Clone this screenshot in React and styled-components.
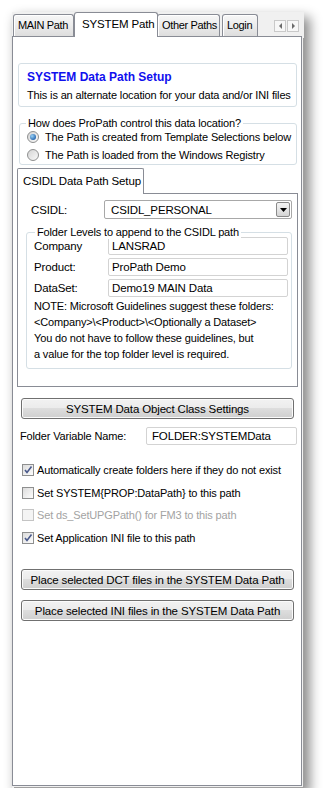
import React from "react";
import styled, { createGlobalStyle } from "styled-components";

const GlobalStyle = createGlobalStyle`
  html, body {
    margin: 0;
    background: #fff;
  }
  body {
    font-family: "Liberation Sans", Arial, sans-serif;
    font-size: 11px;
    letter-spacing: -0.15px;
    color: #000;
  }
`;

const CheckMark = () => (
  <svg width="10" height="10" viewBox="0 0 10 10">
    <path d="M2 5 L4 7.5 L8.5 1.5" fill="none" stroke="#4a5a8c" strokeWidth="1.6" />
  </svg>
);

const Check = ({ checked, disabled, children }) => (
  <CheckRow $disabled={disabled}>
    <CheckBox $disabled={disabled}>{checked && <CheckMark />}</CheckBox>
    {children}
  </CheckRow>
);

const Radio = ({ checked, children }) => (
  <RadioRow>
    <RadioCircle>{checked && <RadioDot />}</RadioCircle>
    {children}
  </RadioRow>
);

const App = () => {
  return (
    <>
      <GlobalStyle />
      <Frame>
        <TabStrip>
          <Tab $w={61}>MAIN Path</Tab>
          <Tab $w={84} $active>SYSTEM Path</Tab>
          <Tab $w={63}>Other Paths</Tab>
          <Tab $w={36} $gap={2}>Login</Tab>
          <Scroller>
            <ScrollBtn>
              <svg width="5" height="6" viewBox="0 0 5 6"><path d="M4 0 L1 3 L4 6 Z" fill="#6b6b6b" /></svg>
            </ScrollBtn>
            <ScrollBtn>
              <svg width="5" height="6" viewBox="0 0 5 6"><path d="M1 0 L4 3 L1 6 Z" fill="#6b6b6b" /></svg>
            </ScrollBtn>
          </Scroller>
        </TabStrip>
        <Panel>
          <HeaderBox>
            <Title>SYSTEM Data Path Setup</Title>
            <Subtitle>This is an alternate location for your data and/or INI files</Subtitle>
          </HeaderBox>

          <Group $top={16} $ml={2} $pt={4} $pb={0}>
            <Legend $left={6}>How does ProPath control this data location?</Legend>
            <Radio checked>The Path is created from Template Selections below</Radio>
            <Radio>The Path is loaded from the Windows Registry</Radio>
          </Group>

          <InnerTabs>
            <InnerTab>CSIDL Data Path Setup</InnerTab>
          </InnerTabs>
          <InnerPanel>
            <ComboRow>
              <ComboLabel>CSIDL:</ComboLabel>
              <Combo>
                <ComboText>CSIDL_PERSONAL</ComboText>
                <ComboBtn>
                  <svg width="7" height="4" viewBox="0 0 7 4"><path d="M0 0 L7 0 L3.5 4 Z" fill="#000" /></svg>
                </ComboBtn>
              </Combo>
            </ComboRow>

            <Group $top={13} $ml={8} $mr={5} $pt={4} $pb={6}>
              <Legend $left={8}>Folder Levels to append to the CSIDL path</Legend>
              <FieldRow>
                <FieldLabel>Company</FieldLabel>
                <Field $w={180} $pl={3}>LANSRAD</Field>
              </FieldRow>
              <FieldRow>
                <FieldLabel>Product:</FieldLabel>
                <Field $w={180} $pl={3}>ProPath Demo</Field>
              </FieldRow>
              <FieldRow>
                <FieldLabel>DataSet:</FieldLabel>
                <Field $w={180} $pl={3}>Demo19 MAIN Data</Field>
              </FieldRow>
              <Note>
                NOTE: Microsoft Guidelines suggest these folders:
                <br />
                &lt;Company&gt;\&lt;Product&gt;\&lt;Optionally a Dataset&gt;
                <br />
                You do not have to follow these guidelines, but
                <br />
                a value for the top folder level is required.
              </Note>
            </Group>
          </InnerPanel>

          <Button $top={11}>SYSTEM Data Object Class Settings</Button>

          <VarRow>
            <VarLabel>Folder Variable Name:</VarLabel>
            <Field $w={151} $pl={5}>FOLDER:SYSTEMData</Field>
          </VarRow>

          <Checks>
            <Check checked>Automatically create folders here if they do not exist</Check>
            <Check>Set SYSTEM&#123;PROP:DataPath&#125; to this path</Check>
            <Check disabled>Set ds_SetUPGPath() for FM3 to this path</Check>
            <Check checked>Set Application INI file to this path</Check>
          </Checks>

          <Button $top={20}>Place selected DCT files in the SYSTEM Data Path</Button>
          <Button $top={10}>Place selected INI files in the SYSTEM Data Path</Button>
        </Panel>
      </Frame>
    </>
  );
};

export default App;

const Frame = styled.div`
  margin: 12px 0 0 12px;
  width: 292px;
  height: 776px;
  background: #f0f0f0;
  box-shadow: 5px 6px 11px 1px rgba(0, 0, 0, 0.45);
  display: flex;
  flex-direction: column;
`;

const TabStrip = styled.div`
  position: relative;
  z-index: 2;
  height: 24px;
  display: flex;
  align-items: flex-end;
  padding-left: 1px;
`;

const Tab = styled.div`
  box-sizing: border-box;
  width: ${(p) => p.$w}px;
  height: ${(p) => (p.$active ? 25 : 22)}px;
  margin-left: ${(p) => p.$gap || 0}px;
  margin-bottom: ${(p) => (p.$active ? -1 : 0)}px;
  margin-right: ${(p) => (p.$active ? -1 : 0)}px;
  padding: ${(p) => (p.$active ? "5px 0 0 7px" : "4px 0 0 4px")};
  border: 1px solid #898c95;
  border-bottom: none;
  border-radius: 3px 3px 0 0;
  background: ${(p) =>
    p.$active
      ? "#fff"
      : "linear-gradient(#f7f7f7 0%, #ececec 50%, #dddddd 100%)"};
  box-shadow: ${(p) => (p.$active ? "none" : "inset 1px 1px 0 #fff")};
  font-size: ${(p) => (p.$active ? "11.5px" : "11px")};
  letter-spacing: ${(p) => (p.$active ? "-0.15px" : "-0.35px")};
  white-space: nowrap;
  overflow: hidden;
`;

const Scroller = styled.div`
  margin-left: auto;
  margin-right: 5px;
  align-self: center;
  margin-top: 4px;
  display: flex;
  gap: 1px;
`;

const ScrollBtn = styled.div`
  width: 10px;
  height: 10px;
  border: 1px solid #c9c9c9;
  background: #f7f7f7;
  display: flex;
  align-items: center;
  justify-content: center;
`;

const Panel = styled.div`
  box-sizing: border-box;
  width: 290px;
  height: 750px;
  background: #fff;
  border: 1px solid #898c95;
  box-shadow: 1px 1px 0 #f0f0f0, 2px 2px 0 #a0a0a0;
  padding: 0 4px 0 4px;
  display: flex;
  flex-direction: column;
`;

const HeaderBox = styled.div`
  margin: 26px 0 0 1px;
  height: 44px;
  box-sizing: border-box;
  border: 1px solid #d5dfe5;
  border-radius: 3px;
  padding: 6px 0 0 8px;
`;

const Title = styled.div`
  color: #1010ee;
  font-weight: bold;
  font-size: 12px;
  letter-spacing: 0;
  line-height: 15px;
`;

const Subtitle = styled.div`
  margin-top: 3px;
  line-height: 14px;
`;

const Group = styled.div`
  position: relative;
  margin-top: ${(p) => p.$top}px;
  margin-left: ${(p) => p.$ml || 0}px;
  margin-right: ${(p) => p.$mr || 0}px;
  padding: ${(p) => p.$pt}px 0 ${(p) => p.$pb}px 0;
  border: 1px solid #d5dfe5;
  border-radius: 3px;
`;

const Legend = styled.div`
  position: absolute;
  top: -8px;
  left: ${(p) => p.$left}px;
  padding: 0 2px;
  background: #fff;
  line-height: 14px;
  white-space: nowrap;
`;

const RadioRow = styled.div`
  height: 18px;
  display: flex;
  align-items: center;
  padding-left: 7px;
  gap: 6px;
  white-space: nowrap;
`;

const RadioCircle = styled.span`
  box-sizing: border-box;
  width: 12px;
  height: 12px;
  border-radius: 50%;
  border: 1px solid #8e8f8f;
  background: linear-gradient(135deg, #d4d4d4, #fafafa);
  display: flex;
  align-items: center;
  justify-content: center;
  flex: none;
`;

const RadioDot = styled.span`
  width: 6px;
  height: 6px;
  border-radius: 50%;
  background: radial-gradient(circle at 35% 35%, #9ad2f6, #1d5ea9 80%);
`;

const InnerTabs = styled.div`
  position: relative;
  z-index: 1;
  margin-top: 3px;
  display: flex;
`;

const InnerTab = styled.div`
  box-sizing: border-box;
  width: 127px;
  height: 26px;
  margin-bottom: -1px;
  padding: 6px 0 0 5px;
  background: #fff;
  border: 1px solid #898c95;
  border-bottom: none;
  border-radius: 2px 2px 0 0;
  font-size: 11.5px;
  white-space: nowrap;
`;

const InnerPanel = styled.div`
  box-sizing: border-box;
  width: 281px;
  height: 194px;
  border: 1px solid #898c95;
  padding: 6px 0 0 0;
`;

const ComboRow = styled.div`
  display: flex;
  align-items: center;
`;

const ComboLabel = styled.div`
  width: 73px;
  padding-left: 13px;
  box-sizing: content-box;
  font-size: 11.5px;
`;

const Combo = styled.div`
  box-sizing: border-box;
  width: 188px;
  height: 19px;
  border: 1px solid #a8a8a8;
  border-radius: 2px;
  display: flex;
  align-items: center;
  padding: 0 1px 0 6px;
`;

const ComboText = styled.span`
  flex: 1;
  font-size: 11.5px;
`;

const ComboBtn = styled.span`
  box-sizing: border-box;
  width: 14px;
  height: 15px;
  border: 1px solid #8a8a8a;
  border-radius: 2px;
  background: linear-gradient(#f4f4f4 0%, #e6e6e6 50%, #d4d4d4 100%);
  display: flex;
  align-items: center;
  justify-content: center;
`;

const FieldRow = styled.div`
  display: flex;
  align-items: center;
  height: 18px;
  margin-bottom: 3px;
`;

const FieldLabel = styled.div`
  width: 74px;
  padding-left: 7px;
  box-sizing: content-box;
  font-size: 11.5px;
  white-space: nowrap;
  overflow: hidden;
`;

const Field = styled.div`
  box-sizing: border-box;
  width: ${(p) => p.$w}px;
  height: 18px;
  border: 1px solid #d3d3d3;
  border-radius: 2px;
  padding-left: ${(p) => p.$pl}px;
  display: flex;
  align-items: center;
  font-size: 11.5px;
  white-space: nowrap;
`;

const Note = styled.div`
  margin-top: -2px;
  padding-left: 7px;
  line-height: 16px;
  white-space: nowrap;
`;

const Button = styled.div`
  box-sizing: border-box;
  margin: ${(p) => p.$top}px 0 0 4px;
  width: 273px;
  height: 21px;
  border: 1px solid #707070;
  border-radius: 3px;
  background: linear-gradient(#f2f2f2 0%, #ebebeb 50%, #dddddd 50%, #cfcfcf 100%);
  box-shadow: inset 0 0 0 1px #fbfbfb;
  display: flex;
  align-items: center;
  justify-content: center;
  font-size: 11.5px;
  white-space: nowrap;
`;

const VarRow = styled.div`
  margin-top: 8px;
  display: flex;
  align-items: center;
`;

const VarLabel = styled.div`
  width: 126px;
  padding-left: 3px;
  box-sizing: content-box;
`;

const Checks = styled.div`
  margin-top: 14px;
  display: flex;
  flex-direction: column;
`;

const CheckRow = styled.div`
  height: 22.5px;
  display: flex;
  align-items: center;
  gap: 3px;
  padding-left: 5px;
  color: ${(p) => (p.$disabled ? "#a3a3a3" : "#000")};
  white-space: nowrap;
`;

const CheckBox = styled.span`
  box-sizing: border-box;
  width: 12px;
  height: 12px;
  border: 1px solid ${(p) => (p.$disabled ? "#c4c4c4" : "#8e8f8f")};
  background: ${(p) =>
    p.$disabled ? "#f4f4f4" : "linear-gradient(135deg, #dcdcdc, #fdfdfd)"};
  display: flex;
  align-items: center;
  justify-content: center;
  flex: none;
`;
